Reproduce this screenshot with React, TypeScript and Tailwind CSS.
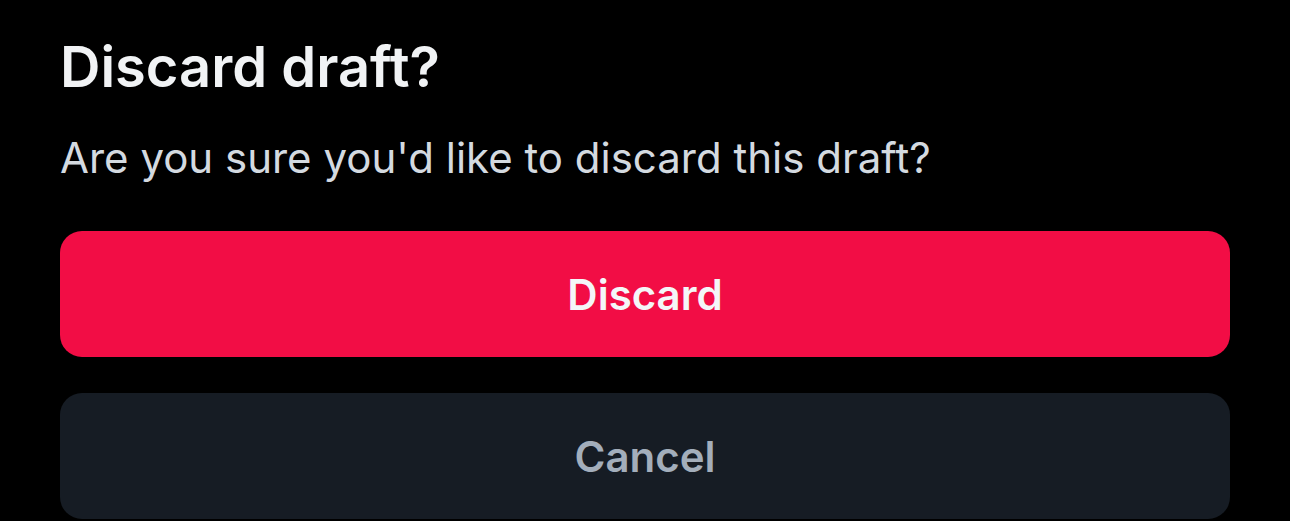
export default function App() {
  return (
    <div className="w-[1290px] h-[521px] bg-black overflow-hidden" style={{ fontFamily: "Inter, 'Noto Sans', sans-serif" }}>
      <div className="px-[60px] pt-[34px] flex flex-col">
        <h1 className="text-[56px] leading-[66px] font-semibold text-[#f1f3f5]">Discard draft?</h1>
        <p className="mt-[32px] text-[42px] leading-[52px] text-[#d4dae0]">Are you sure you'd like to discard this draft?</p>
        <button className="mt-[47px] h-[126px] w-full rounded-[22px] bg-[#f20d45] text-[42px] font-semibold text-[#f4f6f8]">Discard</button>
        <button className="mt-[36px] h-[126px] w-full rounded-[22px] bg-[#161c24] text-[42px] font-semibold text-[#a3aebb]">Cancel</button>
      </div>
    </div>
  );
}
